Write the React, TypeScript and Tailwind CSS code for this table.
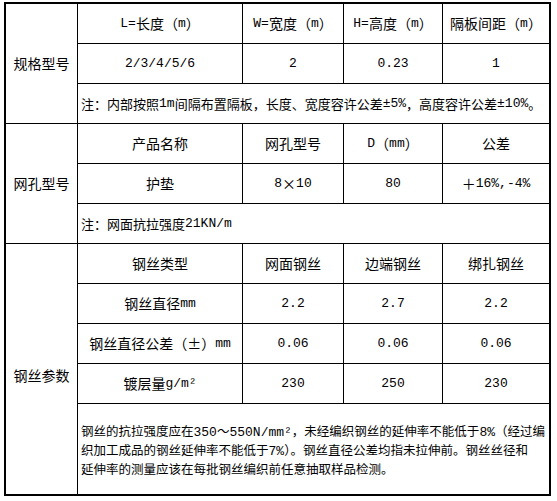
/**
 * 格宾网规格参数表
 */

// 半角字符用等宽字体，中文用 Noto Sans CJK
function M({ children }: { children: React.ReactNode }) {
  return <span className="font-['Liberation_Mono'] text-[13px]">{children}</span>;
}

function Cell({ children, className = '' }: { children?: React.ReactNode; className?: string }) {
  return (
    <div className={`flex items-center justify-center bg-white text-[14px] text-black ${className}`}>
      {children}
    </div>
  );
}

function Num({ children }: { children: React.ReactNode }) {
  return (
    <Cell>
      <M>{children}</M>
    </Cell>
  );
}

export default function App() {
  return (
    <div className="min-h-[501px] w-[557px] bg-white pl-1 pt-[2px] font-['Noto_Sans_CJK_SC']">
      <div className="grid w-[547px] grid-cols-[71px_164px_100px_98px_106px] grid-rows-[repeat(10,39px)_90px] gap-px border-2 border-black bg-black">
        {/* 规格型号 */}
        <Cell className="row-span-3">规格型号</Cell>
        <Cell>
          <M>L=</M>长度（<M>m</M>）
        </Cell>
        <Cell>
          <M>W=</M>宽度（<M>m</M>）
        </Cell>
        <Cell>
          <M>H=</M>高度（<M>m</M>）
        </Cell>
        <Cell>
          隔板间距（<M>m</M>）
        </Cell>
        <Num>2/3/4/5/6</Num>
        <Num>2</Num>
        <Num>0.23</Num>
        <Num>1</Num>
        <Cell className="col-span-4 !justify-start pl-[3px] !text-[13px] whitespace-nowrap">
          注：内部按照<M>1m</M>间隔布置隔板，长度、宽度容许公差<M>±5%</M>，高度容许公差<M>±10%</M>。
        </Cell>

        {/* 网孔型号 */}
        <Cell className="row-span-3">网孔型号</Cell>
        <Cell>产品名称</Cell>
        <Cell>网孔型号</Cell>
        <Cell>
          <M>D</M>（<M>mm</M>）
        </Cell>
        <Cell>公差</Cell>
        <Cell>护垫</Cell>
        <Cell>
          <M>8</M>×<M>10</M>
        </Cell>
        <Num>80</Num>
        <Cell>
          ＋<M>16%,-4%</M>
        </Cell>
        <Cell className="col-span-4 !justify-start pl-[3px] !text-[13px] whitespace-nowrap">
          注：网面抗拉强度<M>21KN/m</M>
        </Cell>

        {/* 钢丝参数 */}
        <Cell className="row-span-5 pt-3">钢丝参数</Cell>
        <Cell>钢丝类型</Cell>
        <Cell>网面钢丝</Cell>
        <Cell>边端钢丝</Cell>
        <Cell>绑扎钢丝</Cell>

        <Cell>
          钢丝直径<M>mm</M>
        </Cell>
        <Num>2.2</Num>
        <Num>2.7</Num>
        <Num>2.2</Num>

        <Cell>
          钢丝直径公差（±）<M>mm</M>
        </Cell>
        <Num>0.06</Num>
        <Num>0.06</Num>
        <Num>0.06</Num>

        <Cell>
          镀层量<M>g/m²</M>
        </Cell>
        <Num>230</Num>
        <Num>250</Num>
        <Num>230</Num>

        <div className="col-span-4 flex items-center bg-white pl-[3px] text-[12.5px] leading-[17px] text-black whitespace-nowrap">
          <p>
            钢丝的抗拉强度应在<M>350</M>～<M>550N/mm²</M>，未经编织钢丝的延伸率不能低于<M>8%</M>（经过编
            <br />
            织加工成品的钢丝延伸率不能低于<M>7%</M>）。钢丝直径公差均指未拉伸前。钢丝丝径和
            <br />
            延伸率的测量应该在每批钢丝编织前任意抽取样品检测。
          </p>
        </div>
      </div>
    </div>
  );
}
